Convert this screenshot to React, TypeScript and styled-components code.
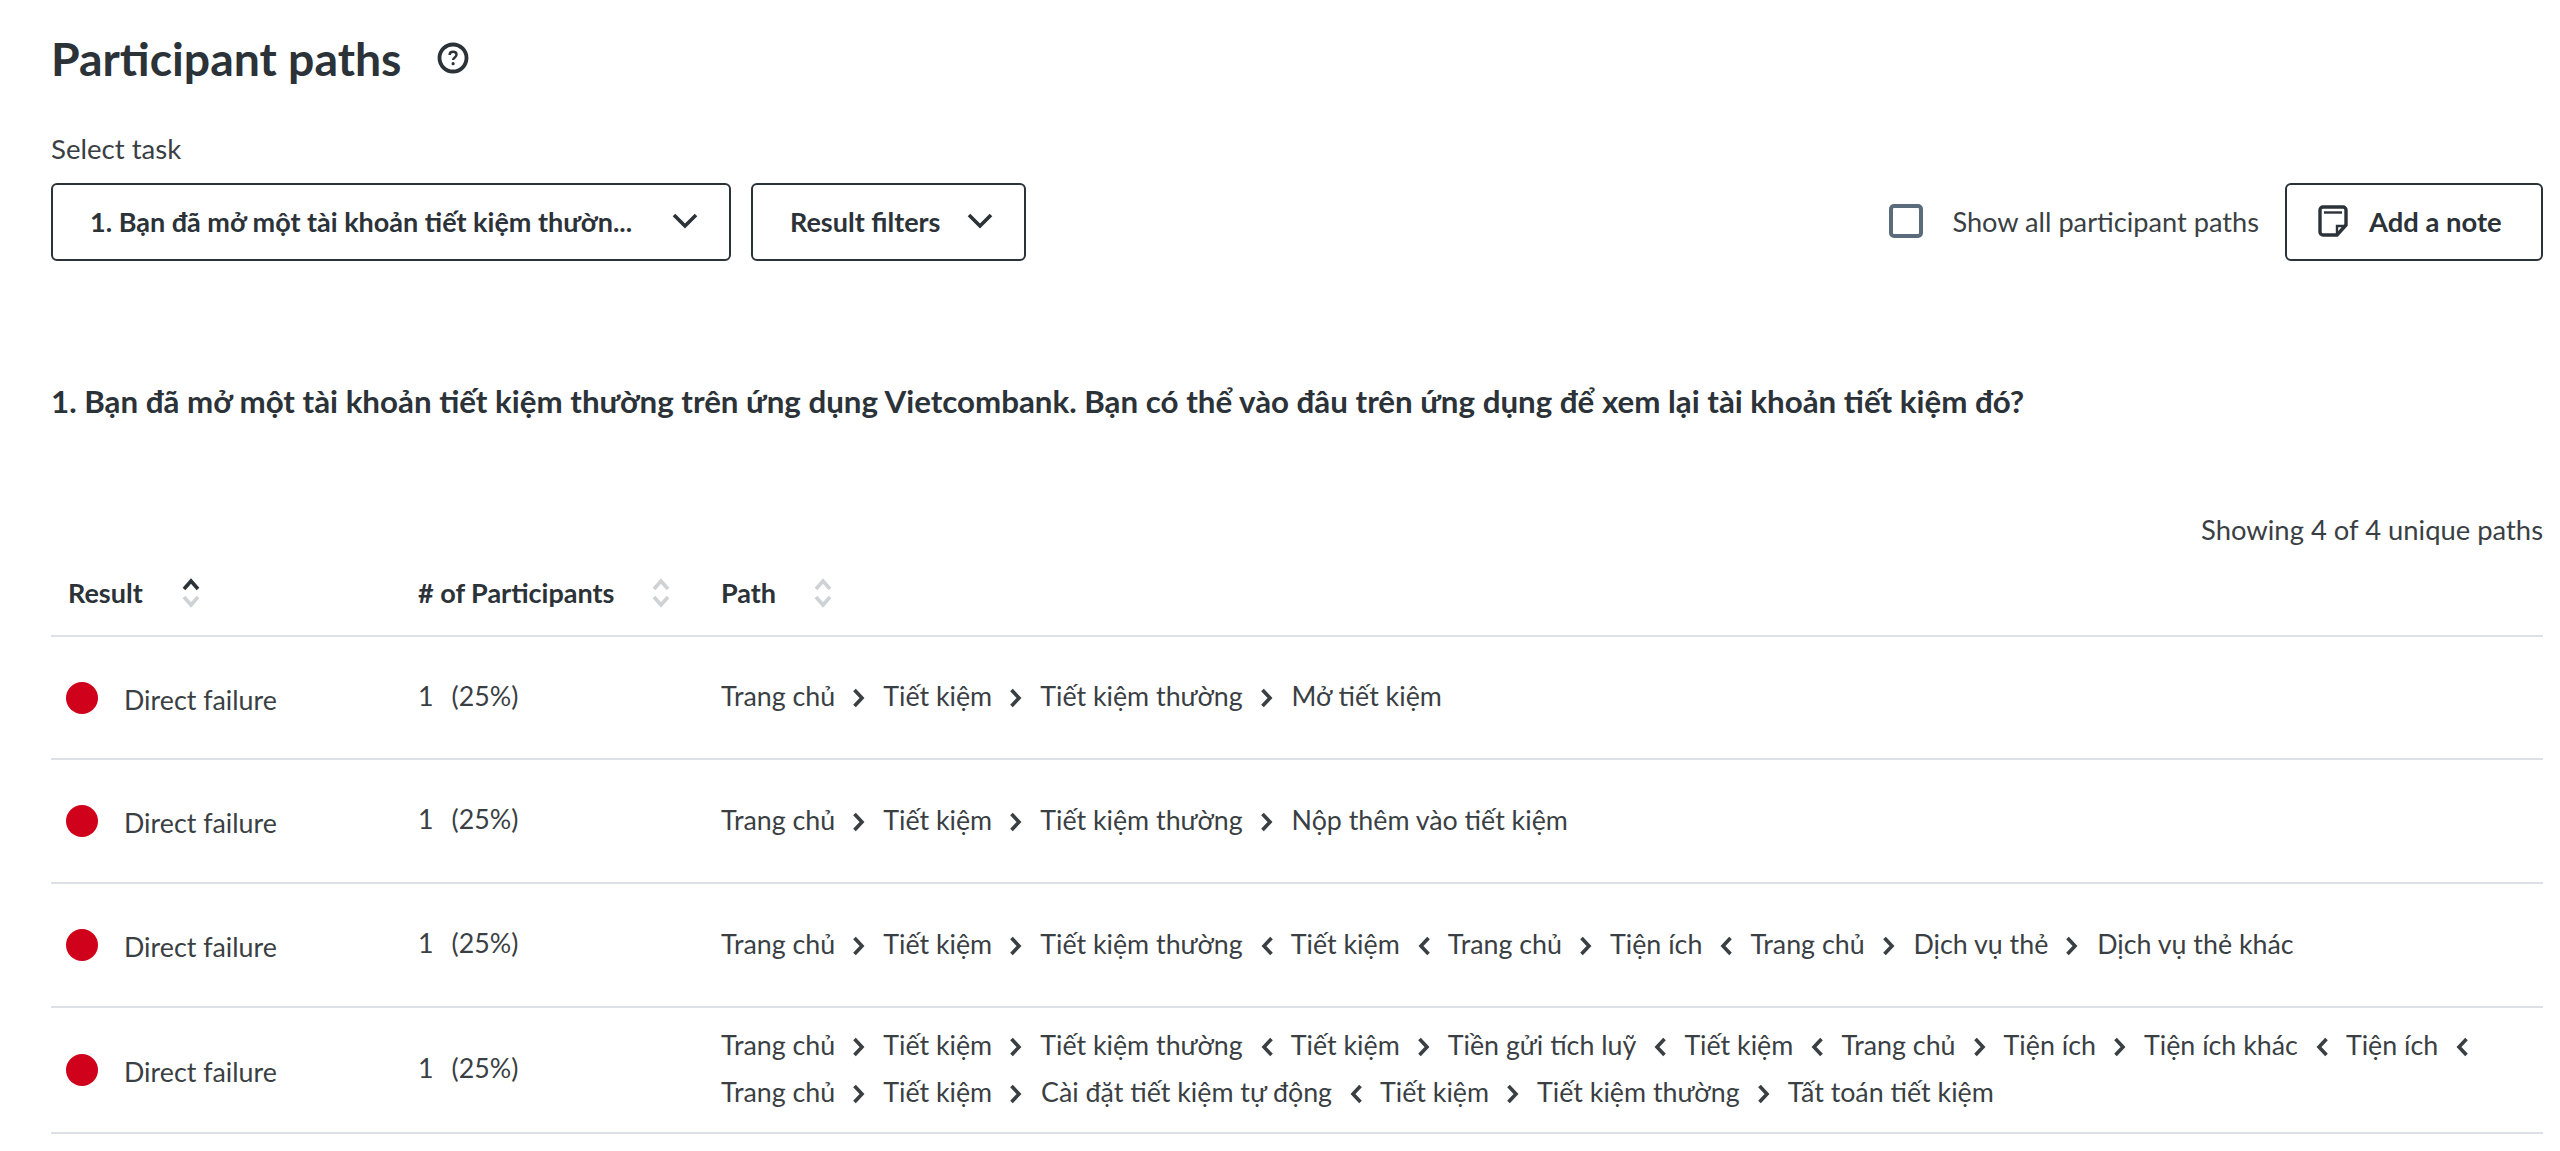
import React from "react";
import styled, { createGlobalStyle } from "styled-components";

const Global = createGlobalStyle`
  html, body { margin: 0; padding: 0; background: #fff; }
  body { font-family: Lato, "Open Sans", "Noto Sans", sans-serif; color: #3a3f44; }
`;

const Page = styled.div`
  display: flex;
  flex-direction: column;
  padding: 0 17px 0 51px;
  height: 1151px;
  box-sizing: border-box;
  overflow: hidden;
`;

const TitleRow = styled.div`
  display: flex;
  align-items: center;
  gap: 36px;
  height: 60px;
  margin-top: 28px;
`;

const Title = styled.h1`
  margin: 0;
  font-size: 46.4px;
  line-height: 60px;
  font-weight: 700;
  color: #2b3238;
`;

const FieldLabel = styled.div`
  margin-top: 44px;
  font-size: 27.6px;
  line-height: 34px;
  color: #3a3f44;
`;

const Toolbar = styled.div`
  display: flex;
  align-items: center;
  margin-top: 17px;
  height: 78px;
`;

const OutlineButton = styled.div<{ $width: number; $padLeft: number }>`
  display: flex;
  align-items: center;
  justify-content: space-between;
  box-sizing: border-box;
  width: ${(p) => p.$width}px;
  height: 78px;
  margin-right: 20px;
  padding: 0 31px 2px ${(p) => p.$padLeft}px;
  border: 2px solid #2b3238;
  border-radius: 6px;
  font-size: 27px;
  font-weight: 700;
  color: #2b3238;
  white-space: nowrap;
`;

const Spacer = styled.div`
  flex: 1;
`;

const CheckBox = styled.div`
  box-sizing: border-box;
  width: 34px;
  height: 34px;
  margin-bottom: 2px;
  border: 4px solid #5a6b7b;
  border-radius: 5px;
`;

const CheckLabel = styled.div`
  margin: 0 26px 2px 29px;
  font-size: 27.2px;
  color: #3a3f44;
  white-space: nowrap;
`;

const NoteButton = styled.div`
  display: flex;
  align-items: center;
  gap: 20px;
  box-sizing: border-box;
  width: 258px;
  height: 78px;
  padding: 0 0 2px 30px;
  border: 2px solid #2b3238;
  border-radius: 6px;
  font-size: 27.4px;
  font-weight: 700;
  color: #2b3238;
  white-space: nowrap;
`;

const Question = styled.div`
  margin-top: 120px;
  font-size: 31.3px;
  line-height: 40px;
  font-weight: 700;
  color: #2b3238;
`;

const Showing = styled.div`
  margin-top: 92px;
  text-align: right;
  font-size: 27.4px;
  line-height: 34px;
  color: #3a3f44;
`;

const HeadRow = styled.div`
  display: grid;
  grid-template-columns: 350px 303px 1fr;
  align-items: center;
  box-sizing: border-box;
  height: 90px;
  padding: 3px 0 0 17px;
  border-bottom: 2px solid #dde1e6;
  font-size: 27px;
  font-weight: 700;
  color: #2b3238;
`;

const HeadCell = styled.div<{ $gap: number }>`
  display: flex;
  align-items: center;
  gap: ${(p) => p.$gap}px;
`;

const Row = styled.div<{ $height: number }>`
  display: grid;
  grid-template-columns: 350px 303px 1fr;
  align-items: center;
  box-sizing: border-box;
  height: ${(p) => p.$height}px;
  padding: 0 0 2px 15px;
  border-bottom: 2px solid #dde1e6;
  font-size: 26.8px;
  color: #3a3f44;
`;

const ResultCell = styled.div`
  display: flex;
  align-items: center;
  gap: 26px;
`;

const Dot = styled.span`
  width: 32px;
  height: 32px;
  flex: none;
  margin-top: 2px;
  border-radius: 50%;
  background: #d0021b;
`;

const ResultText = styled.span`
  padding-top: 6px;
`;

const Count = styled.div`
  display: flex;
  gap: 18px;
  padding: 0 0 2px 2px;
`;

const PathCell = styled.div`
  padding-left: 2px;
  line-height: 47px;
`;

const Step = styled.span`
  white-space: nowrap;
`;

const Glyph = styled.svg`
  display: inline-block;
  vertical-align: -2px;
  margin: 0 11px 0 17px;
`;

const Chevron = ({ left }: { left?: boolean }) => (
  <Glyph width="14" height="20" viewBox="0 0 14 20" fill="none">
    <path
      d={left ? "M11.500 2 4 10l7.500 8" : "M2.500 2 10 10l-7.500 8"}
      stroke="#3a3f44"
      strokeWidth="3.6"
    />
  </Glyph>
);

const Down = () => (
  <svg width="26" height="16" viewBox="0 0 26 16" fill="none">
    <path d="M2 2l11 11L24 2" stroke="#2b3238" strokeWidth="3.6" />
  </svg>
);

const Sort = ({ active }: { active?: boolean }) => (
  <svg width="18" height="30" viewBox="0 0 18 30" fill="none">
    <path d="M2 11l7-8 7 8" stroke={active ? "#2b3238" : "#cfd2d5"} strokeWidth="3.6" />
    <path d="M2 19l7 8 7-8" stroke="#cfd2d5" strokeWidth="3.6" />
  </svg>
);

const Help = () => (
  <svg width="32" height="32" viewBox="0 0 32 32" fill="none">
    <circle cx="16" cy="16" r="13.5" stroke="#2b3238" strokeWidth="3.8" />
    <path d="M12.6 13c0-2 1.500-3.200 3.500-3.200s3.400 1.200 3.400 3c0 2.600-3.400 2.700-3.400 5.200" stroke="#2b3238" strokeWidth="2.400" />
    <circle cx="16.100" cy="21.700" r="1.600" fill="#2b3238" />
  </svg>
);

const Note = () => (
  <svg width="32" height="32" viewBox="0 0 32 32" fill="none">
    <path d="M6 2h20a3 3 0 0 1 3 3v15l-9 10H6a3 3 0 0 1-3-3V5a3 3 0 0 1 3-3Z" stroke="#2b3238" strokeWidth="3.4" />
    <path d="M7 7.500h18" stroke="#2b3238" strokeWidth="2.400" />
    <path d="M28 21h-8v8" stroke="#2b3238" strokeWidth="2.400" />
  </svg>
);

type Sep = ">" | "<" | "";
const parse = (s: string): [string, Sep][] => {
  const parts = s.split(/ ([<>]) /);
  const out: [string, Sep][] = [];
  for (let i = 0; i < parts.length; i += 2) out.push([parts[i], (parts[i + 1] as Sep) || ""]);
  return out;
};

const rows: { height: number; path: string }[] = [
  { height: 123, path: "Trang chủ > Tiết kiệm > Tiết kiệm thường > Mở tiết kiệm" },
  { height: 124, path: "Trang chủ > Tiết kiệm > Tiết kiệm thường > Nộp thêm vào tiết kiệm" },
  { height: 124, path: "Trang chủ > Tiết kiệm > Tiết kiệm thường < Tiết kiệm < Trang chủ > Tiện ích < Trang chủ > Dịch vụ thẻ > Dịch vụ thẻ khác" },
  { height: 126, path: "Trang chủ > Tiết kiệm > Tiết kiệm thường < Tiết kiệm > Tiền gửi tích luỹ < Tiết kiệm < Trang chủ > Tiện ích > Tiện ích khác < Tiện ích < Trang chủ > Tiết kiệm > Cài đặt tiết kiệm tự động < Tiết kiệm > Tiết kiệm thường > Tất toán tiết kiệm" },
];

export default function App() {
  return (
    <Page>
      <Global />
      <TitleRow>
        <Title>Participant paths</Title>
        <Help />
      </TitleRow>
      <FieldLabel>Select task</FieldLabel>
      <Toolbar>
        <OutlineButton $width={680} $padLeft={37}>
          <span>1. Bạn đã mở một tài khoản tiết kiệm thườn...</span>
          <Down />
        </OutlineButton>
        <OutlineButton $width={275} $padLeft={37}>
          <span>Result filters</span>
          <Down />
        </OutlineButton>
        <Spacer />
        <CheckBox />
        <CheckLabel>Show all participant paths</CheckLabel>
        <NoteButton>
          <Note />
          <span>Add a note</span>
        </NoteButton>
      </Toolbar>
      <Question>
        1. Bạn đã mở một tài khoản tiết kiệm thường trên ứng dụng Vietcombank. Bạn có thể vào đâu trên ứng dụng để xem lại tài khoản tiết kiệm đó?
      </Question>
      <Showing>Showing 4 of 4 unique paths</Showing>
      <HeadRow>
        <HeadCell $gap={39}>
          Result <Sort active />
        </HeadCell>
        <HeadCell $gap={38}>
          # of Participants <Sort />
        </HeadCell>
        <HeadCell $gap={38}>
          Path <Sort />
        </HeadCell>
      </HeadRow>
      {rows.map((r, i) => (
        <Row key={i} $height={r.height}>
          <ResultCell>
            <Dot />
            <ResultText>Direct failure</ResultText>
          </ResultCell>
          <Count>
            <span>1</span>
            <span>(25%)</span>
          </Count>
          <PathCell>
            {parse(r.path).map(([t, sep], j) => (
              <React.Fragment key={j}>
                <Step>
                  {t}
                  {sep && <Chevron left={sep === "<"} />}
                </Step>{" "}
              </React.Fragment>
            ))}
          </PathCell>
        </Row>
      ))}
    </Page>
  );
}
